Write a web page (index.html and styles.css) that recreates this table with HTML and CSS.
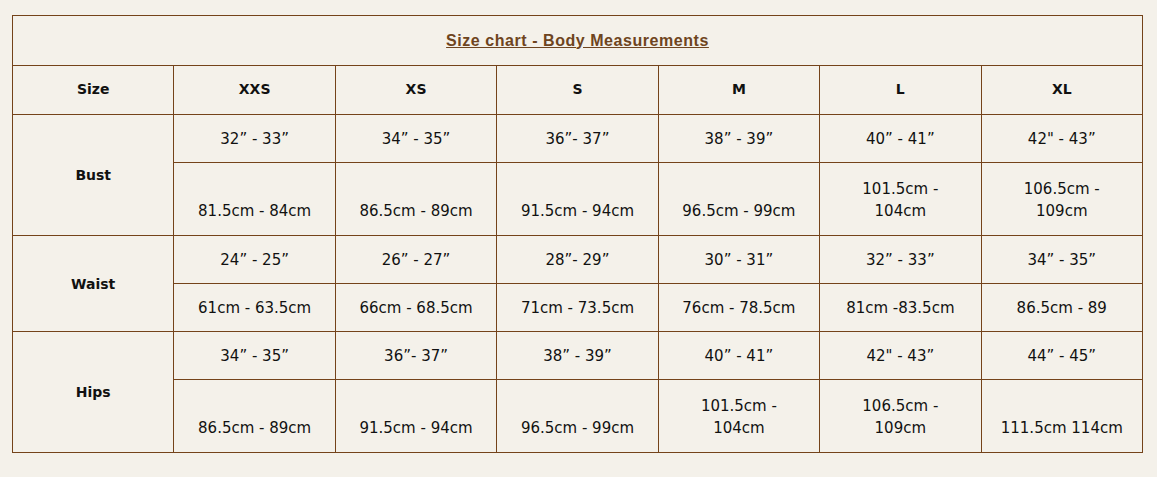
FILE: index.html
```html
<!DOCTYPE html>
<html>
<head>
<meta charset="utf-8">
<link rel="stylesheet" href="styles.css">
</head>
<body>
<div class="page">
<table class="chart">
  <colgroup>
    <col><col><col><col><col><col><col>
  </colgroup>
  <tr class="title-row"><td colspan="7" class="title"><span>Size chart - Body Measurements</span></td></tr>
  <tr class="head-row">
    <th>Size</th><th>XXS</th><th>XS</th><th>S</th><th>M</th><th>L</th><th>XL</th>
  </tr>
  <tr class="short">
    <th rowspan="2" class="label">Bust</th>
    <td>32” - 33”</td><td>34” - 35”</td><td>36”- 37”</td><td>38” - 39”</td><td>40” - 41”</td><td>42" - 43”</td>
  </tr>
  <tr class="tall">
    <td>81.5cm - 84cm</td><td>86.5cm - 89cm</td><td>91.5cm - 94cm</td><td>96.5cm - 99cm</td><td>101.5cm -<br>104cm</td><td>106.5cm -<br>109cm</td>
  </tr>
  <tr class="short">
    <th rowspan="2" class="label">Waist</th>
    <td>24” - 25”</td><td>26” - 27”</td><td>28”- 29”</td><td>30” - 31”</td><td>32” - 33”</td><td>34” - 35”</td>
  </tr>
  <tr class="short">
    <td>61cm - 63.5cm</td><td>66cm - 68.5cm</td><td>71cm - 73.5cm</td><td>76cm - 78.5cm</td><td>81cm -83.5cm</td><td>86.5cm - 89</td>
  </tr>
  <tr class="short">
    <th rowspan="2" class="label">Hips</th>
    <td>34” - 35”</td><td>36”- 37”</td><td>38” - 39”</td><td>40” - 41”</td><td>42" - 43”</td><td>44” - 45”</td>
  </tr>
  <tr class="tall">
    <td>86.5cm - 89cm</td><td>91.5cm - 94cm</td><td>96.5cm - 99cm</td><td>101.5cm -<br>104cm</td><td>106.5cm -<br>109cm</td><td>111.5cm 114cm</td>
  </tr>
</table>
</div>
</body>
</html>
```
FILE: styles.css
```css
html, body {
  margin: 0;
  padding: 0;
  background: #f4f1ea;
}
.page {
  padding: 15px 0 0 12px;
}
.chart {
  width: 1131px;
  border-collapse: collapse;
  table-layout: fixed;
  font-family: "DejaVu Sans", Verdana, sans-serif;
  font-size: 15px;
  color: #111;
}
.chart td, .chart th {
  border: 1px solid #74431a;
  text-align: center;
  padding: 0 4px;
  line-height: 22px;
  font-weight: normal;
}
.chart th {
  font-weight: bold;
  font-size: 14px;
}
.title-row { height: 50px; }
.chart .title {
  font-family: "Liberation Sans", Arial, sans-serif;
  font-weight: bold;
  font-size: 16px;
  color: #6e4420;
  letter-spacing: 0.55px;
}
.title span {
  text-decoration: underline;
}
.head-row { height: 49px; }
.head-row th { padding-bottom: 2px; }
.short td { height: 47px; vertical-align: middle; }
.tall td { height: 59px; vertical-align: bottom; padding-bottom: 13px; }
.chart .label { vertical-align: middle; }
```
